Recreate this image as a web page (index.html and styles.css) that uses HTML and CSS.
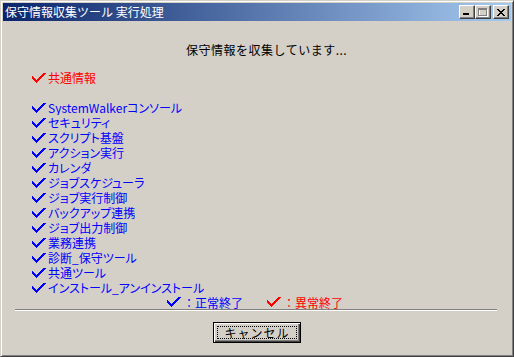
FILE: index.html
```html
<!DOCTYPE html>
<html lang="ja">
<head>
<meta charset="UTF-8" />
<meta name="viewport" content="width=device-width, initial-scale=1" />
<title>保守情報収集ツール 実行処理</title>
<link rel="stylesheet" href="styles.css">
</head>
<body>

  <div class="window">
    <div class="titlebar">
      <span class="title">保守情報収集ツール 実行処理</span>
      <div class="caption-buttons">
        <button class="cap-btn">
          <svg width="8" height="8" viewBox="0 0 8 8"><rect x="0" y="5" width="6" height="2" fill="#000"/></svg>
        </button>
        <button class="cap-btn">
          <svg width="10" height="9" viewBox="0 0 10 9" shape-rendering="crispEdges">
            <rect x="1.5" y="1.5" width="8" height="7" fill="none" stroke="#fff"/>
            <rect x="0.5" y="0.5" width="8" height="7" fill="none" stroke="#808080"/>
            <rect x="0" y="1" width="9" height="1" fill="#808080"/>
          </svg>
        </button>
        <button class="cap-btn close">
          <svg width="8" height="7" viewBox="0 0 8 7" shape-rendering="crispEdges">
            <path d="M0 0h2v1h1v1h2v-1h1v-1h2v1h-1v1h-1v1h-1v1h1v1h1v1h1v1h-2v-1h-1v-1h-2v1h-1v1h-2v-1h1v-1h1v-1h1v-1h-1v-1h-1v-1h-1z" fill="#000"/>
          </svg>
        </button>
      </div>
    </div>

    <div class="content">
      <div class="message">保守情報を収集しています...</div>

      <div class="item error common">
        <svg class="check" width="15" height="12" viewBox="0 0 15 12"><polyline points="1,4.5 5.5,10 14,1" /></svg>
        <span class="label">共通情報</span>
      </div>

      <ul class="items" id="items"></ul>

      <div class="legend">
        <div class="item ok">
          <svg class="check" width="15" height="12" viewBox="0 0 15 12"><polyline points="1,4.5 5.5,10 14,1" /></svg>
          <span class="label">：正常終了</span>
        </div>
        <div class="item error">
          <svg class="check" width="15" height="12" viewBox="0 0 15 12"><polyline points="1,4.5 5.5,10 14,1" /></svg>
          <span class="label">：異常終了</span>
        </div>
      </div>

      <div class="separator"></div>

      <div class="actions">
        <button class="btn-cancel"><span>キャンセル</span></button>
      </div>
    </div>
  </div>

<script>
  const names = [
    'SystemWalkerコンソール', 'セキュリティ', 'スクリプト基盤', 'アクション実行',
    'カレンダ', 'ジョブスケジューラ', 'ジョブ実行制御', 'バックアップ連携',
    'ジョブ出力制御', '業務連携', '診断_保守ツール', '共通ツール',
    'インストール_アンインストール'
  ];
  const list = document.getElementById('items');

  names.forEach(name => {
    const li = document.createElement('li');
    li.className = 'item ok';
    li.innerHTML = '<svg class="check" width="15" height="12" viewBox="0 0 15 12"><polyline points="1,4.5 5.5,10 14,1" /></svg>';
    const label = document.createElement('span');
    label.className = 'label';
    label.textContent = name;
    li.appendChild(label);
    list.appendChild(li);
  });
</script>
</body>
</html>
```

FILE: styles.css
```css
html, body {
  margin: 0; padding: 0;
  width: 514px; height: 357px;
  overflow: hidden;
  background: #d4d0c8;
  font-family: "Noto Sans CJK JP", "Liberation Sans", sans-serif;
  font-size: 12px;
}

/* outer window frame, win2000 style bevel */
.window {
  box-sizing: border-box;
  width: 514px;
  height: 357px;
  border-top: 1px solid #d4d0c8;
  border-left: 1px solid #d4d0c8;
  border-right: 1px solid #404040;
  border-bottom: 1px solid #404040;
  box-shadow: inset 1px 1px #fff, inset -1px -1px #808080;
  padding: 2px;
  display: flex;
  flex-direction: column;
}

.titlebar {
  height: 18px;
  flex: none;
  display: flex;
  align-items: center;
  justify-content: space-between;
  background: linear-gradient(to right, #0a246a, #a6caf0);
  padding: 0 2px;
}

.title {
  color: #fff;
  font-size: 12px;
  line-height: 18px;
}

.caption-buttons {
  display: flex;
}

.cap-btn {
  box-sizing: border-box;
  width: 16px;
  height: 14px;
  padding: 0;
  margin: 0;
  background: #d4d0c8;
  border-top: 1px solid #fff;
  border-left: 1px solid #fff;
  border-right: 1px solid #404040;
  border-bottom: 1px solid #404040;
  box-shadow: inset -1px -1px #808080;
  display: flex;
  align-items: center;
  justify-content: center;
}

.cap-btn.close {
  margin-left: 2px;
}

.content {
  flex: 1;
  padding-top: 21px;
}

.message {
  line-height: 15px;
  padding-left: 183px;
  color: #000;
  letter-spacing: 0.5px;
}

.items {
  list-style: none;
  margin: 0;
  padding: 0;
  margin-top: 15px;
}

.item {
  display: flex;
  align-items: center;
  gap: 2px;
  height: 15px;
  padding-left: 28px;
  white-space: nowrap;
}

/* proportional kana, closer to the old UI font */
.label {
  display: block;
  height: 15px;
  line-height: 15px;
  overflow: hidden;
  font-feature-settings: "palt";
}

.item.common {
  margin-top: 13px;
}

.check {
  flex: none;
  fill: none;
  stroke-width: 2;
  shape-rendering: crispEdges;
}

.ok { color: #0000ff; }
.ok .check { stroke: #0000ff; }
.error { color: #ff0000; }
.error .check { stroke: #ff0000; }

.legend {
  display: flex;
  gap: 23px;
  height: 14px;
  padding-left: 163px;
}

.legend .item {
  padding-left: 0;
  height: 14px;
}

.legend .label {
  font-feature-settings: normal;
}

.separator {
  height: 0;
  border-top: 1px solid #808080;
  border-bottom: 1px solid #fff;
  margin: 0 14px 0 12px;
}

.actions {
  display: flex;
  justify-content: center;
  margin-top: 11px;
}

.btn-cancel {
  box-sizing: border-box;
  width: 88px;
  height: 21px;
  padding: 3px;
  background: #d4d0c8;
  border: 1px solid #000;
  box-shadow: inset 1px 1px #fff, inset -1px -1px #404040, inset -2px -2px #808080;
  font-family: inherit;
  font-size: 12px;
  color: #000;
  display: flex;
}

.btn-cancel span {
  flex: 1;
  border: 1px dotted #000;
  line-height: 11px;
  display: flex;
  align-items: center;
  justify-content: center;
  letter-spacing: 1px;
}
```
